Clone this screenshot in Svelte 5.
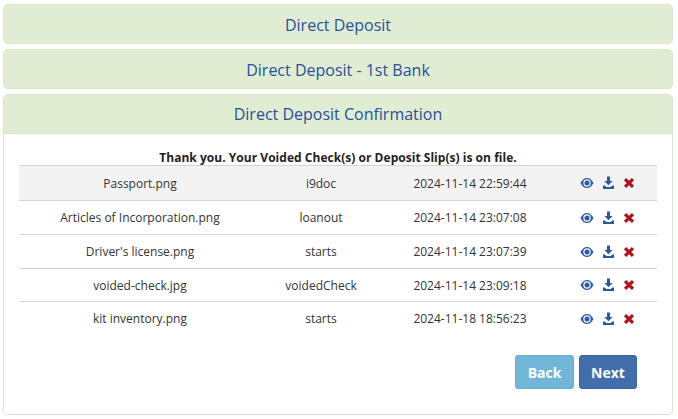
<script>
  const rows = [
    { name: 'Passport.png', type: 'i9doc', date: '2024-11-14 22:59:44' },
    { name: 'Articles of Incorporation.png', type: 'loanout', date: '2024-11-14 23:07:08' },
    { name: "Driver's license.png", type: 'starts', date: '2024-11-14 23:07:39' },
    { name: 'voided-check.jpg', type: 'voidedCheck', date: '2024-11-14 23:09:18' },
    { name: 'kit inventory.png', type: 'starts', date: '2024-11-18 18:56:23' }
  ];
</script>

<div class="page">
  <div class="panel closed"><h3>Direct Deposit</h3></div>
  <div class="panel closed"><h3>Direct Deposit - 1st Bank</h3></div>
  <div class="panel">
    <h3 class="open">Direct Deposit Confirmation</h3>
    <div class="body">
      <p class="thanks">Thank you. Your Voided Check(s) or Deposit Slip(s) is on file.</p>
      <div class="table">
        {#each rows as row}
          <div class="row">
            <span>{row.name}</span>
            <span>{row.type}</span>
            <span>{row.date}</span>
            <span class="icons">
              <svg width="14" height="14" viewBox="0 0 14 14" aria-hidden="true">
                <path fill-rule="evenodd" fill="#2b5aa5" d="M0.5 7C2 4 4.300 2 7 2S12 4 13.500 7C12 10 9.700 12 7 12S2 10 0.500 7ZM7 3.300a3.700 3.700 0 1 0 0 7.400a3.700 3.700 0 0 0 0-7.400Z"/>
                <circle cx="7" cy="7" r="2.500" fill="#2b5aa5"/>
              </svg>
              <svg width="13" height="14" viewBox="0 0 13 14" aria-hidden="true">
                <path fill="#2b5aa5" d="M5 0.500h3v4.500h2.600L6.500 9.300L2.400 5H5ZM1 9.500h1.800l1.500 1.500h4.400l1.500-1.500H12V13H1Z"/>
              </svg>
              <svg width="12" height="14" viewBox="0 0 12 14" aria-hidden="true">
                <path fill="none" stroke="#b01116" stroke-width="3.200" d="M2 3.200L10 10.800M10 3.200L2 10.800"/>
              </svg>
            </span>
          </div>
        {/each}
      </div>
      <div class="actions">
        <button class="back">Back</button>
        <button class="next">Next</button>
      </div>
    </div>
  </div>
</div>

<style>
  :global(body) {
    background: #fff;
  }

  .page {
    width: 670px;
    padding: 4px 5px 0 3px;
    font-family: "Open Sans", sans-serif;
    color: #333;
  }

  .panel {
    border: 1px solid #d9e8c8;
    border-radius: 5px;
    margin-bottom: 5px;
    overflow: hidden;
    background: #fff;
  }

  .closed {
    height: 38px;
    background: #e0edd2;
  }

  h3 {
    margin: 0;
    padding-top: 2px;
    font-size: 16px;
    font-weight: 400;
    line-height: 36px;
    text-align: center;
    color: #28509f;
  }

  .open {
    padding-top: 1px;
    line-height: 37px;
    background: #e0edd2;
    border-bottom: 1px solid #d9e8c8;
  }

  .body {
    height: 280px;
    padding: 0 15px;
  }

  .thanks {
    margin: 0;
    padding-top: 17px;
    height: 14px;
    line-height: 14px;
    font-size: 12px;
    font-weight: 700;
    letter-spacing: 0.03px;
    text-align: center;
    color: #222;
  }

  .table {
    border-top: 1px solid #d4d4d4;
  }

  .row {
    display: grid;
    grid-template-columns: 242px 120px 178px 98px;
    height: 33px;
    align-items: center;
    border-bottom: 1px solid #d4d4d4;
    font-size: 12px;
    text-align: center;
  }

  .row:first-child {
    height: 34px;
    background: #f3f3f3;
  }

  .row:nth-child(4) {
    height: 32px;
  }

  .row:last-child {
    border-bottom: none;
  }

  .icons {
    display: flex;
    padding-left: 21px;
    align-items: center;
  }

  .icons svg + svg {
    margin-left: 8px;
  }

  .actions {
    display: flex;
    justify-content: flex-end;
    gap: 5px;
    padding: 20px 20px 0 0;
  }

  button {
    height: 34px;
    padding: 0;
    border-radius: 3px;
    font-family: inherit;
    font-size: 14px;
    font-weight: 700;
    color: #fff;
  }

  .back {
    width: 59px;
    background: #70b6d9;
    border: 1px solid #66afd3;
  }

  .next {
    width: 58px;
    background: #426eac;
    border: 1px solid #3a629b;
  }
</style>
